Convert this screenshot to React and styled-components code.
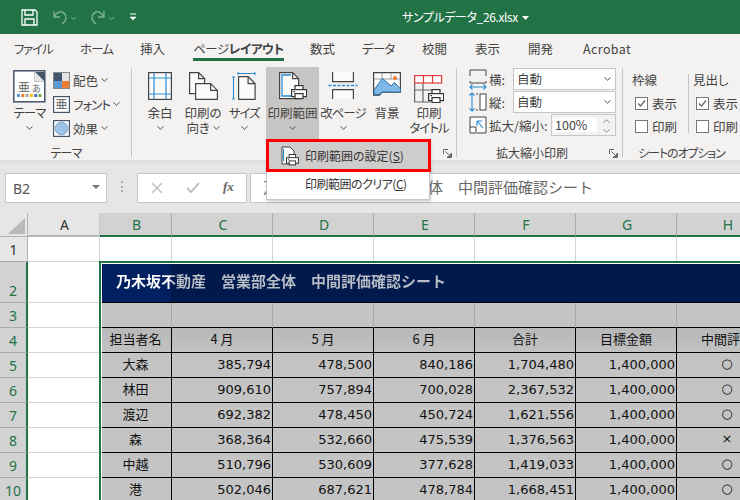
import styled, { createGlobalStyle } from "styled-components"

const GlobalStyle = createGlobalStyle`
  html, body { margin: 0; padding: 0; background: #fff; }
  body {
    width: 740px;
    height: 500px;
    overflow: hidden;
    font-family: "Noto Sans CJK JP", "Noto Sans", sans-serif;
    font-feature-settings: "palt";
  }
  * { box-sizing: border-box; }
`

const Page = styled.div`
  position: relative;
  width: 740px;
  height: 500px;
  overflow: hidden;
`

/* title bar */
const TitleBar = styled.div`
  position: relative;
  height: 34px;
  background: #217346;
`

const QuickIcon = styled.svg`
  position: absolute;
  left: ${p => p.$x}px;
  top: ${p => p.$y}px;
`

const FileName = styled.div`
  position: absolute;
  left: 402px;
  top: 7px;
  color: #fff;
  font-size: 12px;
  letter-spacing: -0.4px;
  line-height: 20px;
  white-space: nowrap;
`

/* tabs */
const TabBar = styled.div`
  display: flex;
  height: 28px;
  padding-left: 14px;
  background: #f3f2f1;
`

const TabSlot = styled.div`
  width: ${p => p.$w}px;
  flex: none;
`

const Tab = styled.div`
  position: relative;
  display: inline-block;
  height: 28px;
  font-size: 12.5px;
  letter-spacing: ${p => p.$track || 0}px;
  line-height: 30px;
  color: #444;
  white-space: nowrap;
  ${p => p.$active && `
    &::after {
      content: "";
      position: absolute;
      left: 0;
      right: 0;
      bottom: 1px;
      height: 3px;
      background: #217346;
    }
  `}
  b { font-weight: 700; }
`

/* ribbon */
const Ribbon = styled.div`
  position: relative;
  display: flex;
  height: 98px;
  background: #f3f2f1;
`

const Group = styled.div`
  position: relative;
  width: ${p => p.$w}px;
  height: 98px;
  flex: none;
  display: flex;
  padding-top: 5px;
  padding-left: ${p => p.$pad || 0}px;
  &::after {
    content: "";
    display: ${p => (p.$last ? "none" : "block")};
    position: absolute;
    right: 0;
    top: 6px;
    height: 89px;
    width: 1px;
    background: #c8c6c4;
  }
`

const GroupLabel = styled.div`
  position: absolute;
  left: 0;
  right: ${p => p.$shift || 0}px;
  top: 83px;
  text-align: center;
  font-size: 12px;
  letter-spacing: ${p => p.$track || 0}px;
  line-height: 16px;
  color: #444;
`

const Launcher = styled.svg`
  position: absolute;
  right: 5px;
  top: 87px;
`

const LargeButton = styled.div`
  width: ${p => p.$w}px;
  height: 72px;
  flex: none;
  margin-left: ${p => p.$gap || 0}px;
  display: flex;
  flex-direction: column;
  align-items: center;
  background: ${p => (p.$on ? "#c8c6c4" : "transparent")};
`

const IconSlot = styled.div`
  height: 39px;
  display: flex;
  align-items: flex-start;
  justify-content: center;
  padding-top: ${p => (p.$top === undefined ? 5 : p.$top)}px;
`

const BtnLabel = styled.div`
  font-size: 12.5px;
  letter-spacing: ${p => p.$track || 0}px;
  line-height: 14.5px;
  color: #444;
  text-align: center;
  white-space: nowrap;
`

const SmallStack = styled.div`
  margin-left: 7px;
  padding-top: 1px;
`

const SmallRow = styled.div`
  display: flex;
  align-items: center;
  gap: 3px;
  height: 24px;
  font-size: 12.5px;
  letter-spacing: ${p => p.$track || 0}px;
  color: #444;
  white-space: nowrap;
`

const ScaleRow = styled.div`
  position: absolute;
  left: 12px;
  top: ${p => p.$y}px;
  display: flex;
  align-items: center;
  height: 22px;
  font-size: 12.5px;
  color: #444;
  white-space: nowrap;
`

const ScaleName = styled.span`
  margin-left: 2px;
  width: ${p => p.$w}px;
`

const Picker = styled.div`
  position: relative;
  width: 103px;
  height: 22px;
  background: #fff;
  border: 1px solid #c8c6c4;
  padding-left: 3px;
  font-size: 12.5px;
  line-height: 20px;
  svg { position: absolute; right: 4px; top: 8px; }
`

const Spinner = styled.div`
  position: relative;
  width: 65px;
  height: 22px;
  background: #f3f2f1;
  border: 1px solid #c8c6c4;
  font-size: 12.5px;
  line-height: 20px;
  span {
    display: block;
    width: 44px;
    height: 14px;
    margin: 3px 0 0 1px;
    padding-left: 2px;
    background: #fff;
    line-height: 14px;
  }
  svg { position: absolute; right: 5px; }
`

const OptionBlock = styled.div`
  position: absolute;
  left: ${p => p.$x}px;
  top: 8px;
  width: 56px;
`

const OptionHead = styled.div`
  font-size: 12.5px;
  line-height: 20px;
  margin-bottom: 2px;
  color: #444;
`

const CheckRow = styled.div`
  display: flex;
  align-items: center;
  gap: 4px;
  height: 23px;
  margin-left: 3px;
  font-size: 12.5px;
  color: #444;
  white-space: nowrap;
`

const CheckBox = styled.div`
  width: 13px;
  height: 13px;
  background: #fff;
  border: 1px solid #777;
  display: flex;
  svg { display: block; }
`

const OptionRule = styled.div`
  position: absolute;
  left: 65px;
  top: 12px;
  width: 1px;
  height: 59px;
  background: #c8c6c4;
`

/* formula bar */
const FormulaArea = styled.div`
  position: relative;
  height: 53px;
  background: linear-gradient(#dcdcdc 0, #e6e6e6 5px);
`

const NameBox = styled.div`
  position: absolute;
  left: 5px;
  top: 13px;
  width: 102px;
  height: 30px;
  background: #fff;
  border: 1px solid #c6c6c6;
  padding-left: 7px;
  font-size: 14px;
  line-height: 29px;
  color: #555;
  font-family: "Noto Sans", sans-serif;
  &::after {
    content: "";
    position: absolute;
    right: 6px;
    top: 11px;
    border-left: 4px solid transparent;
    border-right: 4px solid transparent;
    border-top: 4px solid #777;
  }
`

const GripDots = styled.div`
  position: absolute;
  left: 121px;
  top: 21px;
  width: 2px;
  height: 2px;
  background: #aaa;
  box-shadow: 0 5px 0 #aaa, 0 9px 0 #aaa;
`

const FxBox = styled.div`
  position: absolute;
  left: 137px;
  top: 13px;
  width: 110px;
  height: 30px;
  background: #fff;
  border: 1px solid #c6c6c6;
  svg { position: absolute; top: 8px; }
`

const FxLabel = styled.span`
  position: absolute;
  left: 85px;
  top: 3px;
  font-family: "Liberation Serif", serif;
  font-style: italic;
  font-weight: 700;
  font-size: 13px;
  line-height: 20px;
  color: #666;
`

const FormulaInput = styled.div`
  position: absolute;
  left: 250px;
  top: 13px;
  width: 492px;
  height: 30px;
  background: #fff;
  border: 1px solid #c6c6c6;
  padding-left: 12px;
  font-size: 15px;
  line-height: 25px;
  color: #666;
  white-space: pre;
  font-feature-settings: normal;
`

/* dropdown */
const Menu = styled.div`
  position: absolute;
  left: 266px;
  top: 139px;
  width: 164px;
  height: 61px;
  background: #fff;
  border: 1px solid #c6c6c6;
  box-shadow: 1px 2px 3px rgba(0, 0, 0, 0.18);
`

const MenuItem = styled.div`
  position: relative;
  height: ${p => p.$h}px;
  padding-left: 38px;
  font-size: 12px;
  letter-spacing: ${p => p.$track || 0}px;
  line-height: ${p => p.$h}px;
  color: #333;
  white-space: nowrap;
  background: ${p => (p.$hot ? "#cfcdcb" : "#fff")};
  u { text-underline-offset: 1px; }
`

const MenuIcon = styled.svg`
  position: absolute;
  left: 14px;
  top: 6px;
`

const RedFrame = styled.div`
  position: absolute;
  left: 266px;
  top: 139px;
  width: 165px;
  height: 33px;
  border: 3px solid #ff0000;
`

/* sheet */
const Sheet = styled.div`
  position: relative;
  display: grid;
  grid-template-columns: 28px 72px 72px repeat(6, 101px);
  grid-template-rows: 24px 25px 41px 25px repeat(7, 25px);
  height: 287px;
  overflow: hidden;
  background: #fff;
  color: #111;
`

const Corner = styled.div`
  position: relative;
  background: #e6e6e6;
  border-right: 1px solid #b4b4b4;
  border-bottom: 1px solid #b4b4b4;
  &::after {
    content: "";
    position: absolute;
    right: 2px;
    bottom: 2px;
    border-left: 17px solid transparent;
    border-bottom: 16px solid #b9b9b9;
  }
`

const ColHead = styled.div`
  background: ${p => (p.$sel ? "#d2d2d2" : "#e6e6e6")};
  color: ${p => (p.$sel ? "#217346" : "#333")};
  border-right: 1px solid ${p => (p.$sel ? "#ababab" : "#c4c4c4")};
  border-bottom: 2px solid ${p => (p.$sel ? "#217346" : "#b4b4b4")};
  padding-left: 2px;
  text-align: center;
  font-family: "Noto Sans", sans-serif;
  font-size: 14px;
  line-height: 23px;
`

const RowHead = styled.div`
  position: relative;
  background: ${p => (p.$sel ? "#d2d2d2" : "#e6e6e6")};
  color: ${p => (p.$sel ? "#217346" : "#333")};
  border-bottom: 1px solid #ababab;
  border-right: ${p => (p.$sel ? "2px solid #217346" : "1px solid #b4b4b4")};
  display: flex;
  align-items: flex-end;
  justify-content: center;
  font-family: "Noto Sans", sans-serif;
  font-size: 14px;
  line-height: 23px;
`

const BlankCell = styled.div`
  background: #fff;
  border-right: 1px solid ${p => (p.$noRight ? "transparent" : "#d4d4d4")};
  border-bottom: 1px solid #d4d4d4;
`

const TitleCell = styled.div`
  grid-column: 3 / span 7;
  position: relative;
  background: linear-gradient(90deg, #002060 71px, #001a4d 71px);
  border-bottom: 1px solid #000;
  padding: 9px 0 0 16px;
  font-size: 15px;
  font-weight: 700;
  font-feature-settings: normal;
  line-height: 20px;
  white-space: pre;
`

const TitleText = styled.span`
  display: inline-block;
  background: linear-gradient(90deg, #fff 55px, #b9bdc6 55px);
  -webkit-background-clip: text;
  background-clip: text;
  color: transparent;
`

const BandCell = styled.div`
  background: #c4c4c4;
  border-right: 1px solid #a8a8a8;
  border-bottom: 1px solid #000;
`

const HeadCell = styled.div`
  background: linear-gradient(#b8b8b8, #c2c2c2);
  border-right: 1px solid #000;
  border-bottom: 1px solid #000;
  text-align: center;
  font-size: 13px;
  font-feature-settings: normal;
  line-height: 22px;
  white-space: nowrap;
  overflow: hidden;
`

const NameCell = styled.div`
  background: #c4c4c4;
  border-right: 1px solid #000;
  border-bottom: 1px solid #000;
  text-align: center;
  font-size: 13px;
  line-height: 21px;
`

const NumCell = styled(NameCell)`
  text-align: right;
  padding-right: 1px;
  font-family: "DejaVu Sans", sans-serif;
  line-height: 24px;
`

const MarkCell = styled(NameCell)`
  font-family: "DejaVu Sans", sans-serif;
  line-height: 21px;
`

const SelectionEdge = styled.div`
  position: absolute;
  left: 99px;
  top: 48px;
  width: 660px;
  height: 260px;
  border-top: 2px solid #217346;
  border-left: 2px solid #217346;
  box-shadow: inset 1px 1px 0 #fff;
  pointer-events: none;
`

const Chevron = ({ color = "#555" }) => (
  <svg width="7" height="4" viewBox="0 0 7 4" style={{ flex: "none", verticalAlign: 3 }}>
    <path d="M.5.5 3.500 3.200 6.500.5" fill="none" stroke={color} strokeWidth="1" />
  </svg>
)

const Printer = ({ x, y }) => (
  <g transform={`translate(${x} ${y})`} fill="#fff" stroke="#333" strokeWidth="1.2">
    <rect x="4" y=".6" width="8" height="5" />
    <rect x=".6" y="4.6" width="15" height="7" />
    <rect x="4" y="8.6" width="8" height="5" />
    <path d="M2.400 6.600h1.600" stroke="#333" />
  </g>
)

const Sheet1 = ({ x, y, w, h, fold = 7 }) => (
  <path
    d={`M${x} ${y}h${w - fold}l${fold} ${fold}v${h - fold}h-${w}zM${x + w - fold} ${y}v${fold}h${fold}`}
    fill="#fbfbfb"
    stroke="#444"
    strokeWidth="1.2"
  />
)

const ThemeIcon = () => (
  <svg width="33" height="33" viewBox="0 0 33 33">
    <rect x=".8" y=".8" width="31" height="31" fill="#fff" stroke="#44546a" strokeWidth="1.5" />
    <path d="M22 2h9v9z" fill="#44546a" />
    <path d="M21.500 2v9.500h9.500" fill="#e4e4e4" stroke="#aaa" strokeWidth=".6" />
    <text x="5" y="22" fontSize="12" fill="#666" fontFamily="Noto Sans CJK JP">亜</text>
    <text x="19" y="22" fontSize="9" fill="#666" fontFamily="Noto Sans CJK JP">あ</text>
    {["#5b9bd5", "#ed7d31", "#a5a5a5", "#ffc000", "#4472c4", "#70ad47"].map((c, i) => (
      <rect key={c} x={4 + i * 4.3} y="24" width="3" height="3" fill={c} />
    ))}
  </svg>
)

const SwatchIcon = () => (
  <svg width="17" height="17" viewBox="0 0 17 17" style={{ flex: "none" }}>
    <rect x="1" y="1" width="8" height="8" fill="#44546a" />
    <rect x="9" y="1" width="7" height="8" fill="#e4e3e3" />
    <rect x="1" y="9" width="8" height="7" fill="#5b9bd5" />
    <rect x="9" y="9" width="7" height="7" fill="#ed7d31" />
    <rect x=".5" y=".5" width="16" height="16" fill="none" stroke="#888" />
  </svg>
)

const FontIcon = () => (
  <svg width="17" height="17" viewBox="0 0 17 17" style={{ flex: "none" }}>
    <rect x=".6" y=".6" width="15.800" height="15.800" fill="#fff" stroke="#44546a" strokeWidth="1.2" />
    <text x="2.500" y="13" fontSize="12" fill="#555" fontFamily="Noto Sans CJK JP">亜</text>
  </svg>
)

const EffectIcon = () => (
  <svg width="17" height="17" viewBox="0 0 17 17" style={{ flex: "none" }}>
    <rect x=".6" y=".6" width="15.800" height="15.800" fill="#fff" stroke="#44546a" strokeWidth="1.2" />
    <circle cx="8.500" cy="8.500" r="6.300" fill="#9dc3e6" stroke="#7fa6cc" />
  </svg>
)

const MarginIcon = () => (
  <svg width="24" height="28" viewBox="0 0 24 28">
    <rect x=".6" y=".6" width="22.800" height="26.800" fill="#fbfbfb" stroke="#444" strokeWidth="1.200" />
    <path d="M6 1v26M18 1v26M1 6h22M1 22h22" stroke="#2a8dd4" strokeWidth="1.200" />
  </svg>
)

const OrientIcon = () => (
  <svg width="29" height="28" viewBox="0 0 29 28">
    <Sheet1 x={.6} y={.6} w={15} h={21} fold={6} />
    <path d="M6.600 11.600h15l6.800 6.800v9h-21.800z" fill="#fbfbfb" stroke="#444" strokeWidth="1.200" />
    <path d="M21.600 11.600v6.800h6.800" fill="none" stroke="#444" strokeWidth="1.200" />
  </svg>
)

const SizeIcon = () => (
  <svg width="24" height="28" viewBox="0 0 24 28">
    <path d="M6 1.500h17M6 0v3M23 0v3" stroke="#2a8dd4" strokeWidth="1.100" fill="none" />
    <path d="M1.500 5v22M0 5h3M0 27h3" stroke="#2a8dd4" strokeWidth="1.100" fill="none" />
    <Sheet1 x={6.600} y={4.600} w={16.500} h={22.800} fold={7} />
  </svg>
)

const PrintAreaIcon = () => (
  <svg width="28" height="28" viewBox="0 0 28 28">
    <path d="M.6.600h13l6 6v20H.6z" fill="#fbfbfb" stroke="#444" strokeWidth="1.200" />
    <path d="M13.600.600v6h6" fill="none" stroke="#444" strokeWidth="1.200" />
    <path d="M12 3H3v21h9" fill="none" stroke="#2a8dd4" strokeWidth="1.300" />
    <Printer x={12} y={13} />
  </svg>
)

const BreakIcon = () => (
  <svg width="30" height="28" viewBox="0 0 30 28">
    <path d="M4.600 0v9.600h20.800V0" fill="#fbfbfb" stroke="#444" strokeWidth="1.200" />
    <path d="M.5 13.500h29" stroke="#2a8dd4" strokeWidth="1.300" strokeDasharray="3 1.500" />
    <path d="M4.600 27V17.600h20.800V27" fill="#fbfbfb" stroke="#444" strokeWidth="1.200" />
  </svg>
)

const BackgroundIcon = () => (
  <svg width="28" height="26" viewBox="0 0 28 26">
    <path d="M.6.600h26.800v19.600H9l-2.500 3H.6z" fill="#fbfbfb" stroke="#444" strokeWidth="1.200" />
    <path d="M9 1v14M18 1v6M1 7h26" stroke="#999" strokeWidth="1" />
    <path d="M1 18 9.500 6.500 18 14l3.500-3.500 6 6.500v3H9l-2 2.500H1z" fill="#7fb9ea" stroke="#2b6ea8" strokeWidth="1" />
    <circle cx="22" cy="6" r="2" fill="#ed7d31" />
  </svg>
)

const TitlesIcon = () => (
  <svg width="30" height="28" viewBox="0 0 30 28">
    <path d="M.6 8v19h16M.6 15h18M9 8v19" fill="none" stroke="#666" strokeWidth="1.200" />
    <rect x=".6" y=".6" width="27" height="7.400" fill="#fff" stroke="#e03a3a" strokeWidth="1.200" />
    <path d="M9.500 1v7M18.500 1v7" stroke="#e03a3a" strokeWidth="1.200" />
    <Printer x={14} y={14} />
  </svg>
)

const WidthIcon = () => (
  <svg width="18" height="21" viewBox="0 0 18 21" style={{ flex: "none" }}>
    <path d="M1 7V1h16v6M1 12v2h16v-2" fill="none" stroke="#444" strokeWidth="1" />
    <path d="M1 18h16M3.500 15.500 1 18l2.500 2.500M14.500 15.500 17 18l-2.500 2.500" fill="none" stroke="#2a8dd4" strokeWidth="1.100" />
  </svg>
)

const HeightIcon = () => (
  <svg width="18" height="20" viewBox="0 0 18 20" style={{ flex: "none" }}>
    <rect x="11" y="2" width="6" height="16" fill="#fff" stroke="#444" />
    <path d="M7 2H9M7 18H9" stroke="#444" />
    <path d="M3 1v18M.5 3.500 3 1l2.500 2.500M.5 16.500 3 19l2.500-2.500" fill="none" stroke="#2a8dd4" strokeWidth="1.100" />
  </svg>
)

const ZoomIcon = () => (
  <svg width="18" height="18" viewBox="0 0 18 18" style={{ flex: "none" }}>
    <path d="M1 11V1h16v16H8" fill="#fbfbfb" stroke="#444" />
    <path d="M1 11h6v6H1z" fill="#fff" stroke="#444" />
    <path d="M8 5h5M8 5v5M8 5l6 7" fill="none" stroke="#2a8dd4" strokeWidth="1.100" />
  </svg>
)

const LauncherIcon = () => (
  <Launcher width="9" height="9" viewBox="0 0 9 9">
    <path d="M.5 5V.5H5M8.500 4v4.500H4M2.500 2.500l5 5M7.500 4.500v3h-3" fill="none" stroke="#666" />
  </Launcher>
)

const tabs = [
  { name: "ファイル", w: 66, track: -1.2 },
  { name: "ホーム", w: 60, track: -0.9 },
  { name: "挿入", w: 53 },
  { name: "ページレイアウト", w: 117, track: -0.4, active: true },
  { name: "数式", w: 52 },
  { name: "データ", w: 60, track: -0.9 },
  { name: "校閲", w: 53 },
  { name: "表示", w: 53 },
  { name: "開発", w: 55 },
  { name: "Acrobat", w: 60, track: 0.4 },
]

const colNames = ["A", "B", "C", "D", "E", "F", "G", "H"]

const people = [
  ["大森", "385,794", "478,500", "840,186", "1,704,480", "○"],
  ["林田", "909,610", "757,894", "700,028", "2,367,532", "○"],
  ["渡辺", "692,382", "478,450", "450,724", "1,621,556", "○"],
  ["森", "368,364", "532,660", "475,539", "1,376,563", "×"],
  ["中越", "510,796", "530,609", "377,628", "1,419,033", "○"],
  ["港", "502,046", "687,621", "478,784", "1,668,451", "○"],
]

const headers = ["担当者名", "4 月", "5 月", "6 月", "合計", "目標金額", "中間評価"]

const App = () => {
  return (
    <Page>
      <GlobalStyle />
      <TitleBar>
        <QuickIcon $x={21} $y={9} width="17" height="17" viewBox="0 0 17 17">
          <path d="M1 1h13l2 2v13H1z M4 1v5h8V1 M4 16v-6h9v6" fill="none" stroke="#fff" strokeWidth="1.300" />
        </QuickIcon>
        <QuickIcon $x={51} $y={9} width="26" height="17" viewBox="0 0 26 17">
          <path d="M3 2v6h6M3 8c2-4 6-6 8-5 4 1 5 6 3 9l-3 3" fill="none" stroke="#7fb39a" strokeWidth="1.300" />
          <path d="M20 8l2.500 2.500L25 8" fill="none" stroke="#7fb39a" />
        </QuickIcon>
        <QuickIcon $x={89} $y={9} width="26" height="17" viewBox="0 0 26 17">
          <path d="M15 2v6H9M15 8c-2-4-6-6-8-5-4 1-5 6-3 9l3 3" fill="none" stroke="#7fb39a" strokeWidth="1.300" />
          <path d="M20 8l2.500 2.500L25 8" fill="none" stroke="#7fb39a" />
        </QuickIcon>
        <QuickIcon $x={129} $y={13} width="8" height="8" viewBox="0 0 8 8">
          <path d="M1 1h6" stroke="#fff" />
          <path d="M1 4l3 3 3-3z" fill="#fff" stroke="#fff" strokeWidth=".5" />
        </QuickIcon>
        <FileName>サンプルデータ_26.xlsx</FileName>
        <QuickIcon $x={522} $y={16} width="7" height="4" viewBox="0 0 7 4">
          <path d="M0 0h7L3.500 4z" fill="#fff" />
        </QuickIcon>
      </TitleBar>

      <TabBar>
        {tabs.map(t => (
          <TabSlot key={t.name} $w={t.w}>
            {t.active ? (
              <Tab $active $track={t.track}>ページ<b>レイアウト</b></Tab>
            ) : (
              <Tab $track={t.track}>{t.name}</Tab>
            )}
          </TabSlot>
        ))}
      </TabBar>

      <Ribbon>
        <Group $w={132} $pad={13}>
          <LargeButton $w={33}>
            <IconSlot $top={3}><ThemeIcon /></IconSlot>
            <BtnLabel $track={-1}>テーマ</BtnLabel>
            <BtnLabel><Chevron /></BtnLabel>
          </LargeButton>
          <SmallStack>
            <SmallRow><SwatchIcon />配色 <Chevron /></SmallRow>
            <SmallRow $track={-1}><FontIcon />フォント <Chevron /></SmallRow>
            <SmallRow><EffectIcon />効果 <Chevron /></SmallRow>
          </SmallStack>
          <GroupLabel $track={-0.8}>テーマ</GroupLabel>
        </Group>

        <Group $w={325} $pad={9}>
          <LargeButton $w={38}>
            <IconSlot><MarginIcon /></IconSlot>
            <BtnLabel>余白</BtnLabel>
            <BtnLabel><Chevron /></BtnLabel>
          </LargeButton>
          <LargeButton $w={48}>
            <IconSlot><OrientIcon /></IconSlot>
            <BtnLabel>印刷の</BtnLabel>
            <BtnLabel>向き <Chevron /></BtnLabel>
          </LargeButton>
          <LargeButton $w={34}>
            <IconSlot><SizeIcon /></IconSlot>
            <BtnLabel $track={-1.2}>サイズ</BtnLabel>
            <BtnLabel><Chevron /></BtnLabel>
          </LargeButton>
          <LargeButton $w={53} $gap={5} $on>
            <IconSlot><PrintAreaIcon /></IconSlot>
            <BtnLabel>印刷範囲</BtnLabel>
            <BtnLabel><Chevron /></BtnLabel>
          </LargeButton>
          <LargeButton $w={48}>
            <IconSlot><BreakIcon /></IconSlot>
            <BtnLabel $track={-1}>改ページ</BtnLabel>
            <BtnLabel><Chevron /></BtnLabel>
          </LargeButton>
          <LargeButton $w={40}>
            <IconSlot><BackgroundIcon /></IconSlot>
            <BtnLabel>背景</BtnLabel>
          </LargeButton>
          <LargeButton $w={44}>
            <IconSlot $top={8}><TitlesIcon /></IconSlot>
            <BtnLabel>印刷</BtnLabel>
            <BtnLabel $track={-1}>タイトル</BtnLabel>
          </LargeButton>
          <LauncherIcon />
        </Group>

        <Group $w={166}>
          <ScaleRow $y={6}>
            <WidthIcon /><ScaleName $w={24}>横:</ScaleName>
            <Picker>自動<Chevron /></Picker>
          </ScaleRow>
          <ScaleRow $y={29}>
            <HeightIcon /><ScaleName $w={24}>縦:</ScaleName>
            <Picker>自動<Chevron /></Picker>
          </ScaleRow>
          <ScaleRow $y={52}>
            <ZoomIcon /><ScaleName $w={62}>拡大/縮小:</ScaleName>
            <Spinner>
              <span>100%</span>
              <svg width="7" height="4" viewBox="0 0 7 4" style={{ top: 4 }}>
                <path d="M.5 3.500 3.500.8 6.500 3.500" fill="none" stroke="#888" />
              </svg>
              <svg width="7" height="4" viewBox="0 0 7 4" style={{ top: 14 }}>
                <path d="M.5.500 3.500 3.200 6.500.500" fill="none" stroke="#888" />
              </svg>
            </Spinner>
          </ScaleRow>
          <GroupLabel $shift={16}>拡大縮小印刷</GroupLabel>
          <LauncherIcon />
        </Group>

        <Group $w={117} $last>
          <OptionBlock $x={9}>
            <OptionHead>枠線</OptionHead>
            <CheckRow>
              <CheckBox>
                <svg width="11" height="11" viewBox="0 0 11 11">
                  <path d="M2 5.500 4.500 8 9 2.500" fill="none" stroke="#666" strokeWidth="1.200" />
                </svg>
              </CheckBox>
              表示
            </CheckRow>
            <CheckRow><CheckBox />印刷</CheckRow>
          </OptionBlock>
          <OptionRule />
          <OptionBlock $x={70}>
            <OptionHead>見出し</OptionHead>
            <CheckRow>
              <CheckBox>
                <svg width="11" height="11" viewBox="0 0 11 11">
                  <path d="M2 5.500 4.500 8 9 2.500" fill="none" stroke="#666" strokeWidth="1.200" />
                </svg>
              </CheckBox>
              表示
            </CheckRow>
            <CheckRow><CheckBox />印刷</CheckRow>
          </OptionBlock>
          <GroupLabel $shift={0} $track={-1.1}>シートのオプション</GroupLabel>
        </Group>
      </Ribbon>

      <FormulaArea>
        <NameBox>B2</NameBox>
        <GripDots />
        <FxBox>
          <svg width="12" height="12" viewBox="0 0 12 12" style={{ left: 13 }}>
            <path d="M1 1l10 10M11 1 1 11" stroke="#c4c4c4" strokeWidth="1.600" />
          </svg>
          <svg width="14" height="12" viewBox="0 0 14 12" style={{ left: 48 }}>
            <path d="M1 6l4 4 8-9" fill="none" stroke="#c4c4c4" strokeWidth="2" />
          </svg>
          <FxLabel>fx</FxLabel>
        </FxBox>
        <FormulaInput>乃木坂不動産　営業部全体　中間評価確認シート</FormulaInput>
      </FormulaArea>

      <Sheet>
        <Corner />
        {colNames.map(c => (
          <ColHead key={c} $sel={c !== "A"}>{c}</ColHead>
        ))}

        <RowHead>1</RowHead>
        {colNames.map(c => <BlankCell key={c} />)}

        <RowHead $sel>2</RowHead>
        <BlankCell $noRight />
        <TitleCell><TitleText>乃木坂不動産　営業部全体　中間評価確認シート</TitleText></TitleCell>

        <RowHead $sel>3</RowHead>
        <BlankCell $noRight />
        {colNames.slice(1).map(c => <BandCell key={c} />)}

        <RowHead $sel>4</RowHead>
        <BlankCell $noRight />
        {headers.map(h => <HeadCell key={h}>{h}</HeadCell>)}

        {people.map((row, i) => [
          <RowHead key={`r${i}`} $sel>{i + 5}</RowHead>,
          <BlankCell key={`a${i}`} $noRight />,
          <NameCell key={`n${i}`}>{row[0]}</NameCell>,
          <NumCell key={`c${i}`}>{row[1]}</NumCell>,
          <NumCell key={`d${i}`}>{row[2]}</NumCell>,
          <NumCell key={`e${i}`}>{row[3]}</NumCell>,
          <NumCell key={`f${i}`}>{row[4]}</NumCell>,
          <NumCell key={`g${i}`}>1,400,000</NumCell>,
          <MarkCell key={`h${i}`}>{row[5]}</MarkCell>,
        ])}
        <SelectionEdge />
      </Sheet>

      <Menu>
        <MenuItem $hot $h={31}>
          <MenuIcon width="18" height="20" viewBox="0 0 18 20">
            <path d="M1 1h8l4 4v13H1z" fill="#fbfbfb" stroke="#444" />
            <path d="M2.500 3v12" stroke="#2a8dd4" />
            <g transform="translate(5 8) scale(.8)">
              <Printer x={0} y={0} />
            </g>
          </MenuIcon>
          印刷範囲の設定(<u>S</u>)
        </MenuItem>
        <MenuItem $h={26} $track={-0.5}>印刷範囲のクリア(<u>C</u>)</MenuItem>
      </Menu>
      <RedFrame />
    </Page>
  )
}

export default App
